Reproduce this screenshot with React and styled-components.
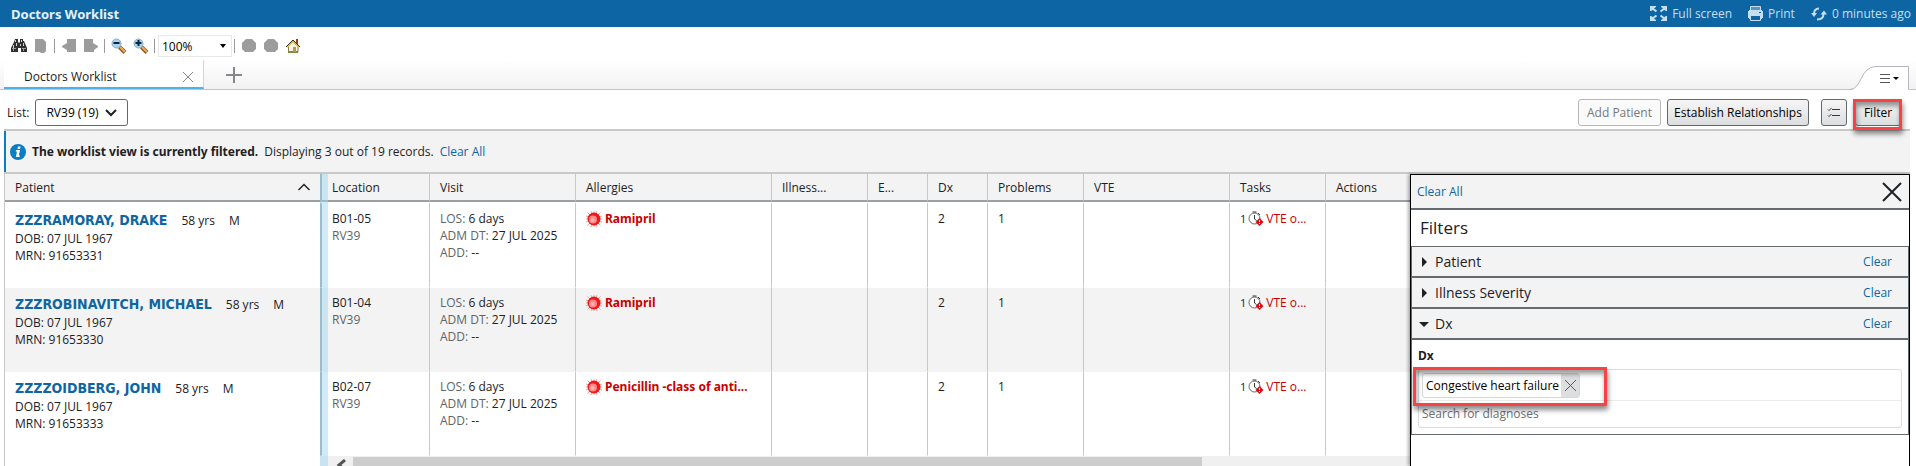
import React, { useState } from 'react'
import styled, { createGlobalStyle, css } from 'styled-components'

const GlobalStyle = createGlobalStyle`
  * {
    box-sizing: border-box;
  }
  body {
    margin: 0;
    background: #fff;
    color: #1c2126;
    font-family: Tahoma, "Open Sans", sans-serif;
    font-size: 12px;
    line-height: 17px;
  }
  button, input, select {
    font: inherit;
    color: inherit;
    margin: 0;
    padding: 0;
    border: 0;
    background: none;
  }
  svg {
    display: block;
    flex: none;
  }
`

const boldFont = css`
  font-family: Tahoma, "Noto Sans", sans-serif;
  font-weight: bold;
`

const Page = styled.div`
  display: flex;
  flex-direction: column;
  height: 100vh;
  overflow: hidden;
`

const TitleBar = styled.header`
  display: flex;
  flex: none;
  align-items: center;
  justify-content: space-between;
  height: 27px;
  padding: 0 5px 0 11px;
  background: #0d66a3;
`

const Title = styled.h1`
  ${boldFont}
  margin: 0;
  padding-top: 2px;
  font-size: 13px;
  color: #e8f1f8;
`

const TitleActions = styled.div`
  display: flex;
  gap: 16px;
`

const TitleButton = styled.button`
  display: flex;
  align-items: center;
  gap: 5px;
  color: #c6deef;
  white-space: nowrap;
`

const Toolbar = styled.div`
  display: flex;
  flex: none;
  align-items: center;
  gap: 6px;
  height: 33px;
  padding: 5px 11px 0;
`

const ToolButton = styled.button`
  display: flex;
  width: 16px;
  height: 16px;
`

const Separator = styled.span`
  width: 1px;
  height: 14px;
  margin-left: -1px;
  background: #999;
`

const SelectBox = styled.div`
  display: grid;
  align-items: center;

  select {
    grid-area: 1 / 1;
    appearance: none;
    width: 100%;
    height: 100%;
  }
  svg {
    grid-area: 1 / 1;
    justify-self: end;
    pointer-events: none;
  }
`

const ZoomSelect = styled(SelectBox)`
  width: 74px;
  height: 22px;
  margin: 0 -3px;
  padding: 0 4px 0 3px;
  border: 1px solid #e8e8e8;
  color: #000;
`

const ListSelect = styled(SelectBox)`
  width: 93px;
  height: 27px;
  padding: 0 10px;
  border: 1px solid #63686d;
  border-radius: 3px;
  color: #000;
`

const TabStrip = styled.nav`
  display: flex;
  flex: none;
  height: 30px;
  padding: 0 6px 0 4px;
  border-bottom: 1px solid #c3c3c6;
  background: linear-gradient(#fff, #f2f2f2);
`

const Tab = styled.div`
  display: flex;
  align-items: center;
  justify-content: space-between;
  width: 200px;
  padding: 6px 9px 0 20px;
  border-right: 1px solid #d4d4d4;
  border-bottom: 2px solid #4eb0e8;
  background: #fff;
`

const NewTab = styled.button`
  padding: 0 22px;
`

const TabMenu = styled.button`
  align-self: flex-end;
  margin: 0 0 -1px auto;
`

const ListBar = styled.div`
  display: flex;
  flex: none;
  align-items: center;
  gap: 6px;
  height: 39px;
  padding: 6px 15px 0 7px;
`

const Push = styled.div`
  display: flex;
  align-items: center;
  gap: 6px;
  margin-left: auto;
`

const ListButton = styled.button`
  display: flex;
  align-items: center;
  justify-content: center;
  height: 27px;
  width: ${props => props.$width}px;
  border: 1px solid #63686d;
  border-radius: 3px;
  background: linear-gradient(#f6f6f6, #dcdddf);
  color: #000;
  white-space: nowrap;

  &:disabled {
    border-color: #b5b7b9;
    background: #fafafa;
    color: #75797d;
  }
`

const ViewButtons = styled.div`
  display: flex;
  gap: 8px;
  margin-left: 6px;
`

const Marked = styled.div`
  position: relative;

  &::after {
    content: '';
    position: absolute;
    inset: ${props => props.$inset};
    border: 3px solid #fb4242;
    box-shadow: 1px 4px 5px rgba(0, 0, 0, .45), inset 1px 4px 5px rgba(0, 0, 0, .4);
    pointer-events: none;
  }
`

const Notice = styled.div`
  display: flex;
  flex: none;
  align-items: center;
  gap: 6px;
  height: 45px;
  margin: 0 6px 0 4px;
  border-top: 2px solid #c8c8c8;
  border-bottom: 2px solid #c8c8c8;
  box-shadow: inset 2px 0 #0a7dc4;
  padding-left: 6px;
  background: #f3f3f3;

  b {
    ${boldFont}
  }
`

const Link = styled.a`
  color: #0d66a3;
  text-decoration: none;
`

const Workspace = styled.div`
  display: flex;
  flex: 1;
  min-height: 0;
  margin: 0 6px 0 4px;
`

const Grid = styled.div`
  position: relative;
  flex: 1;
  min-width: 0;
  border-left: 1px solid #c8c8c8;
`

const Table = styled.table`
  width: 100%;
  table-layout: fixed;
  border-collapse: separate;
  border-spacing: 0;
`

const edge = css`
  border-left: 1px solid #c8c8c8;

  &:first-child {
    border-left: 0;
  }
  &:nth-child(2) {
    border-left: 2px solid #9a9fa3;
  }
`

const Th = styled.th`
  ${edge}
  height: 28px;
  width: ${props => props.$width ? `${props.$width}px` : 'auto'};
  padding: 0 10px;
  border-bottom: 2px solid #9a9fa3;
  background: #f3f3f3;
  font-weight: normal;
  text-align: left;
  white-space: nowrap;
`

const SortHead = styled.div`
  display: flex;
  align-items: center;
  justify-content: space-between;
`

const Row = styled.tr`
  background: ${props => props.$shaded ? '#f3f3f3' : '#fff'};
`

const Td = styled.td`
  ${edge}
  height: 84px;
  padding: 6px 0 0 10px;
  border-bottom: 1px solid transparent;
  vertical-align: top;
  white-space: nowrap;

  tr:first-child > & {
    height: 86px;
    border-top: 2px solid #fff;
  }
`

const PatientLine = styled.div`
  display: flex;
  align-items: center;
  gap: 14px;
  height: 20px;
`

const PatientName = styled(Link)`
  font-family: Tahoma, "DejaVu Sans Condensed", sans-serif;
  font-size: 14px;
  font-weight: bold;
`

const Muted = styled.span`
  color: #5f6468;
`

const Allergy = styled.div`
  ${boldFont}
  display: flex;
  align-items: center;
  gap: 3px;
  color: #c80000;
`

const Task = styled.div`
  display: flex;
  align-items: center;
  gap: 2px;

  a {
    color: #c80000;
    text-decoration: none;
  }
`

const Count = styled.span`
  font-size: 11px;
`

const Splitter = styled.div`
  position: absolute;
  top: 0;
  bottom: 0;
  left: 315px;
  width: 8px;
  background: rgba(160, 215, 240, .5);
`

const ScrollTrack = styled.div`
  display: flex;
  align-items: center;
  height: 17px;
  margin-left: 315px;
  padding-left: 15px;
  gap: 7px;
  background: #f0f0f0;
`

const ScrollThumb = styled.div`
  width: 79%;
  height: 15px;
  background: #cdcdcd;
`

const Panel = styled.aside`
  position: relative;
  width: 500px;
  border: 1px solid #000;
  border-bottom: 0;
  background: #fff;
  box-shadow: -2px 0 3px rgba(0, 0, 0, .3);
`

const PanelTop = styled.div`
  display: flex;
  align-items: center;
  justify-content: space-between;
  height: 35px;
  padding: 0 7px 0 6px;
  border-bottom: 2px solid #656a6e;
  background: #f3f3f3;
`

const PanelTitle = styled.h2`
  margin: 0;
  padding-left: 9px;
  font-size: 17px;
  font-weight: normal;
  line-height: 36px;
`

const Accordion = styled.div`
  border: 1px solid #656a6e;
`

const Section = styled.div`
  display: flex;
  align-items: center;
  justify-content: space-between;
  height: 31px;
  padding: 0 16px 0 7px;
  border-bottom: 2px solid #656a6e;
  background: #f3f3f3;
`

const Toggle = styled.button`
  display: flex;
  align-items: center;
  gap: 6px;
  font-size: 14px;
`

const SectionBody = styled.div`
  height: 94px;
  padding: 7px 6px 0;
`

const FieldLabel = styled.label`
  ${boldFont}
  display: block;
  height: 22px;
`

const Picker = styled.div`
  height: 59px;
  border: 1px solid #dcdcdc;
  border-radius: 3px;
`

const Chosen = styled.div`
  height: 31px;
  padding: 3px;
  border-bottom: 1px solid #ececec;
`

const Chip = styled.div`
  display: flex;
  align-items: center;
  gap: 2px;
  height: 25px;
  padding-left: 3px;
  border: 1px solid #d5d6d8;
  border-radius: 3px;
  color: #000;
  white-space: nowrap;

  button {
    display: grid;
    place-items: center;
    width: 18px;
    height: 100%;
    background: #dcdee0;
  }
`

const ChipMark = styled(Marked)`
  width: fit-content;
`

const Search = styled.input`
  display: block;
  width: 100%;
  height: 25px;
  padding: 0 3px;

  &::placeholder {
    color: #6c7074;
    opacity: 1;
  }
`

const FullScreenIcon = () => (
  <svg width="17" height="17" viewBox="0 0 17 17" fill="#c6deef" stroke="#c6deef">
    <path stroke="none" d="M0 1h6v1L4.500 3 2 5.500 1 6H0zM17 1h-6v1l1.500 1L15 5.500l1 .5h1zM0 16h6v-1l-1.500-1L2 11.500 1 11H0zM17 16h-6v-1l1.500-1 2.500-2.500 1-.5h1z" />
    <path strokeWidth="2" d="M2 3l4.500 3.500M15 3l-4.500 3.500M2 14l4.500-3.500M15 14l-4.500-3.500" />
  </svg>
)

const PrintIcon = () => (
  <svg width="15" height="17" viewBox="0 0 15 17">
    <path fill="none" stroke="#c6deef" d="M2.500 5.500v-4h10v4" />
    <path fill="#c6deef" opacity=".4" d="M3 2h9v3H3z" />
    <path fill="#c6deef" d="M1 5h13v9h-1v-4H2v4H1zM0 6h15v7H0z" />
    <path fill="#0d66a3" stroke="#c6deef" d="M2.500 10.500h10v5h-10z" />
    <path fill="#0d66a3" d="M11 7h2v1h-2z" />
  </svg>
)

const RefreshIcon = () => (
  <svg width="16" height="16" viewBox="0 0 16 16">
    <path fill="none" stroke="#c6deef" strokeWidth="2" d="M8 2.500C5 2.500 3 4.500 3 8M6 13.500c4 0 6.500-2 6.500-5.500" />
    <path fill="#c6deef" d="M0 7h6l-3 4zM9.500 8.500h6.500l-3-4z" />
  </svg>
)

const BinocularsIcon = () => (
  <svg width="16" height="16" viewBox="0 0 16 16">
    <path fill="#2e2e2e" d="M4 1h3v3l1 1 1-1V1h3v2h1l3 7v4h-6v-4H7v4H0v-4l3-6z" />
    <path stroke="#d0d0d0" d="M4.500 2v2M2.500 7v3M5.500 5v3M12.500 5v3M10.500 2v2M9.500 6v2" />
    <path stroke="#9b9b9b" d="M1 10.500h4M11 10.500h4M2.500 11v2M12.500 11v2" />
  </svg>
)

const PageIcon = () => (
  <svg width="16" height="16" viewBox="0 0 16 16" fill="#9c9c9c">
    <path d="M2 1h8l3 3v9l-2 2H8l-1-1H2z" />
  </svg>
)

const BackIcon = () => (
  <svg width="16" height="16" viewBox="0 0 16 16" fill="#9c9c9c">
    <path d="M6 1h9v13H6v-2L1 9V8l5-3z" />
  </svg>
)

const ForwardIcon = () => (
  <svg width="16" height="16" viewBox="0 0 16 16" fill="#9c9c9c">
    <path d="M1 1h9v4l5 3v1l-4 3v2H1z" />
  </svg>
)

const MagnifierIcon = ({ plus }) => (
  <svg width="16" height="16" viewBox="0 0 16 16">
    <path stroke="#7b5b34" strokeWidth="4" d="M8.500 9l5.500 5.500" />
    <path stroke="#f3a956" strokeWidth="2" d="M9 9l5 5" />
    <circle cx="5.500" cy="5.500" r="4.500" fill="#a5d4f0" stroke="#8fa9ba" />
    <path stroke="#0d2740" strokeWidth="2" d={plus ? 'M2.500 5h6M5.500 2v6' : 'M2.500 5h6'} />
  </svg>
)

const CircleIcon = () => (
  <svg width="16" height="16" viewBox="0 0 16 16" fill="#9c9c9c">
    <path d="M5 1h6l4 4v6l-3 3H4l-3-3V5z" />
  </svg>
)

const HomeIcon = () => (
  <svg width="16" height="16" viewBox="0 0 16 16">
    <path fill="#9a3b26" d="M11 1h2v6h-2z" />
    <path fill="#f7f4e8" stroke="#87785a" d="M3.500 8L8 4l5 4v6H3.500z" />
    <path fill="#7a8a3c" d="M3 13h10v2H3z" />
    <path fill="#c4953a" d="M8 9h3v5H8z" />
    <path stroke="#e3c24a" strokeWidth="2" d="M2 9l6-6 6 6" fill="none" />
    <path fill="none" stroke="#332a20" d="M1 9l7-7 7 7" />
  </svg>
)

const CaretIcon = () => (
  <svg width="8" height="4" viewBox="0 0 8 4"><path d="M1 0h6L4 4z" /></svg>
)

const ChevronIcon = () => (
  <svg width="12" height="8" viewBox="0 0 12 8" fill="none" stroke="#1c2126" strokeWidth="2">
    <path d="M1 1l5 5 5-5" />
  </svg>
)

const SortIcon = () => (
  <svg width="12" height="8" viewBox="0 0 12 8" fill="none" stroke="#1c2126" strokeWidth="1.500">
    <path d="M.5 7L6 1.500 11.500 7" />
  </svg>
)

const CrossIcon = ({ size, color, weight = 1 }) => (
  <svg width={size} height={size} viewBox={`0 0 ${size} ${size}`} stroke={color} strokeWidth={weight}>
    <path d={`M1 1L${size - 1} ${size - 1}M${size - 1} 1L1 ${size - 1}`} />
  </svg>
)

const PlusIcon = () => (
  <svg width="16" height="16" viewBox="0 0 16 16" stroke="#85878a" strokeWidth="2">
    <path d="M8 0v16M0 8h16" />
  </svg>
)

const TabMenuShape = () => (
  <svg width="60" height="24" viewBox="0 0 60 24">
    <path fill="#fff" d="M0 24c11 0 11-23.500 26-23.500h32.500V24z" />
    <path fill="none" stroke="#b5b7c0" d="M0 23.500c12 0 10-23 26-23h32.500v23" />
    <path stroke="#555" d="M30 8.500h10M30 12.500h10M30 16.500h10" />
    <path d="M43 11h6l-3 3z" />
  </svg>
)

const ChecklistIcon = () => (
  <svg width="14" height="10" viewBox="0 0 14 10" fill="none" stroke="#33383c">
    <path d="M5 1.500h8M5 7.500h8M1 1.500l1 1L4.500 0M1 7.500l1 1L4.500 6" />
  </svg>
)

const InfoIcon = () => (
  <svg width="16" height="16" viewBox="0 0 16 16">
    <circle cx="8" cy="8" r="8" fill="#0a7dc4" />
    <path fill="#fff" d="M8 2.500h2.500L10 5H7.500zM6 6h4l-1.200 5.500H10L9.500 13H6l.9-5.500H5.700z" />
  </svg>
)

const AllergyIcon = () => (
  <svg width="16" height="16" viewBox="0 0 16 16">
    <path stroke="#f0a8a8" d="M1.500 1.500l13 13M14.500 1.500l-13 13M8 0v16M0 8h16M5 0l6 16M11 0L5 16M0 5l16 6M0 11l16-6" />
    <circle cx="8" cy="8" r="6.500" fill="#f01818" />
    <circle cx="7" cy="8.500" r="4" fill="#ff8a8a" />
    <circle cx="6.500" cy="9" r="2" fill="#ffb0b0" />
  </svg>
)

const OverdueIcon = () => (
  <svg width="16" height="16" viewBox="0 0 16 16">
    <circle cx="6.500" cy="7.500" r="5.500" fill="#fff" stroke="#666" />
    <path fill="none" stroke="#333" d="M6.500 4v4l2 1.500M4.500 1h4M10 2l2 2" />
    <path fill="#d80c0c" d="M11.500 7l4 4-4 4-4-4z" />
    <path stroke="#fff" d="M11.500 9v2M11.500 12v1" />
  </svg>
)

const ArrowIcon = ({ open }) => (
  <svg width="10" height="10" viewBox="0 0 10 10" fill="#1c2126">
    <path d={open ? 'M0 3h10L5 8z' : 'M3 0v10l5-5z'} />
  </svg>
)

const ScrollArrow = () => (
  <svg width="11" height="12" viewBox="0 0 11 12" fill="none" stroke="#555" strokeWidth="3">
    <path d="M10 1L4 6l6 5" />
  </svg>
)

const columns = [
  { name: 'Location', width: 109 },
  { name: 'Visit', width: 146 },
  { name: 'Allergies', width: 196 },
  { name: 'Illness...', width: 96 },
  { name: 'E...', width: 60 },
  { name: 'Dx', width: 60 },
  { name: 'Problems', width: 96 },
  { name: 'VTE', width: 146 },
  { name: 'Tasks', width: 96 },
  { name: 'Actions' }
]

const patients = [
  { name: 'ZZZRAMORAY, DRAKE', mrn: '91653331', bed: 'B01-05', allergy: 'Ramipril' },
  { name: 'ZZZROBINAVITCH, MICHAEL', mrn: '91653330', bed: 'B01-04', allergy: 'Ramipril' },
  { name: 'ZZZZOIDBERG, JOHN', mrn: '91653333', bed: 'B02-07', allergy: 'Penicillin -class of anti...' }
]

const PatientRow = ({ patient, shaded }) => (
  <Row $shaded={shaded}>
    <Td>
      <PatientLine>
        <PatientName href="#patient">{patient.name}</PatientName>
        <span>58 yrs</span>
        <span>M</span>
      </PatientLine>
      <div>DOB: 07 JUL 1967</div>
      <div>MRN: {patient.mrn}</div>
    </Td>
    <Td>
      <div>{patient.bed}</div>
      <Muted>RV39</Muted>
    </Td>
    <Td>
      <div><Muted>LOS:</Muted> 6 days</div>
      <div><Muted>ADM DT:</Muted> 27 JUL 2025</div>
      <div><Muted>ADD:</Muted> --</div>
    </Td>
    <Td>
      <Allergy><AllergyIcon />{patient.allergy}</Allergy>
    </Td>
    <Td />
    <Td />
    <Td>2</Td>
    <Td>1</Td>
    <Td />
    <Td>
      <Task>
        <Count>1</Count>
        <OverdueIcon />
        <a href="#tasks">VTE o...</a>
      </Task>
    </Td>
    <Td />
  </Row>
)

const FilterSection = ({ name, open, onToggle }) => (
  <Section>
    <Toggle onClick={onToggle} aria-expanded={open}>
      <ArrowIcon open={open} />
      {name}
    </Toggle>
    <Link href="#clear">Clear</Link>
  </Section>
)

const FilterPanel = () => {
  const [open, setOpen] = useState('Dx')

  return (
    <Panel>
      <PanelTop>
        <Link href="#clear-all">Clear All</Link>
        <button aria-label="Close"><CrossIcon size={20} color="#1c2126" weight={2} /></button>
      </PanelTop>
      <PanelTitle>Filters</PanelTitle>
      <Accordion>
        {['Patient', 'Illness Severity', 'Dx'].map(name => (
          <FilterSection key={name} name={name} open={open === name}
            onToggle={() => setOpen(open === name ? '' : name)} />
        ))}
        {open === 'Dx' &&
          <SectionBody>
            <FieldLabel htmlFor="diagnosis">Dx</FieldLabel>
            <Picker>
              <Chosen>
                <ChipMark $inset="-6px -27px -8px -9px">
                  <Chip>
                    Congestive heart failure
                    <button aria-label="Remove"><CrossIcon size={13} color="#55595d" /></button>
                  </Chip>
                </ChipMark>
              </Chosen>
              <Search id="diagnosis" placeholder="Search for diagnoses" />
            </Picker>
          </SectionBody>
        }
      </Accordion>
    </Panel>
  )
}

const App = () => (
  <Page>
    <GlobalStyle />
    <TitleBar>
      <Title>Doctors Worklist</Title>
      <TitleActions>
        <TitleButton><FullScreenIcon />Full screen</TitleButton>
        <TitleButton><PrintIcon />Print</TitleButton>
        <TitleButton><RefreshIcon />0 minutes ago</TitleButton>
      </TitleActions>
    </TitleBar>

    <Toolbar>
      <ToolButton aria-label="Find"><BinocularsIcon /></ToolButton>
      <ToolButton aria-label="Page"><PageIcon /></ToolButton>
      <Separator />
      <ToolButton aria-label="Back"><BackIcon /></ToolButton>
      <ToolButton aria-label="Forward"><ForwardIcon /></ToolButton>
      <Separator />
      <ToolButton aria-label="Zoom out"><MagnifierIcon /></ToolButton>
      <ToolButton aria-label="Zoom in"><MagnifierIcon plus /></ToolButton>
      <Separator />
      <ZoomSelect>
        <select aria-label="Zoom"><option>100%</option></select>
        <CaretIcon />
      </ZoomSelect>
      <Separator />
      <ToolButton aria-label="Previous"><CircleIcon /></ToolButton>
      <ToolButton aria-label="Next"><CircleIcon /></ToolButton>
      <ToolButton aria-label="Home"><HomeIcon /></ToolButton>
    </Toolbar>

    <TabStrip>
      <Tab>
        Doctors Worklist
        <button aria-label="Close tab"><CrossIcon size={12} color="#85878a" /></button>
      </Tab>
      <NewTab aria-label="New tab"><PlusIcon /></NewTab>
      <TabMenu aria-label="Tab menu"><TabMenuShape /></TabMenu>
    </TabStrip>

    <ListBar>
      <label htmlFor="list">List:</label>
      <ListSelect>
        <select id="list"><option>RV39 (19)</option></select>
        <ChevronIcon />
      </ListSelect>
      <Push>
        <ListButton $width={83} disabled>Add Patient</ListButton>
        <ListButton $width={142}>Establish Relationships</ListButton>
        <ViewButtons>
          <ListButton $width={26} aria-label="Checklist"><ChecklistIcon /></ListButton>
          <Marked $inset="0 -1px -4px -2px">
            <ListButton $width={46}>Filter</ListButton>
          </Marked>
        </ViewButtons>
      </Push>
    </ListBar>

    <Notice>
      <InfoIcon />
      <b>The worklist view is currently filtered.</b>
      <span>Displaying 3 out of 19 records.</span>
      <Link href="#clear-all">Clear All</Link>
    </Notice>

    <Workspace>
      <Grid>
        <Table>
          <thead>
            <tr>
              <Th $width={315}>
                <SortHead>Patient<SortIcon /></SortHead>
              </Th>
              {columns.map(column => (
                <Th key={column.name} $width={column.width}>{column.name}</Th>
              ))}
            </tr>
          </thead>
          <tbody>
            {patients.map((patient, i) => (
              <PatientRow key={patient.mrn} patient={patient} shaded={i % 2 === 1} />
            ))}
          </tbody>
        </Table>
        <ScrollTrack>
          <ScrollArrow />
          <ScrollThumb />
        </ScrollTrack>
        <Splitter />
      </Grid>
      <FilterPanel />
    </Workspace>
  </Page>
)

export default App
